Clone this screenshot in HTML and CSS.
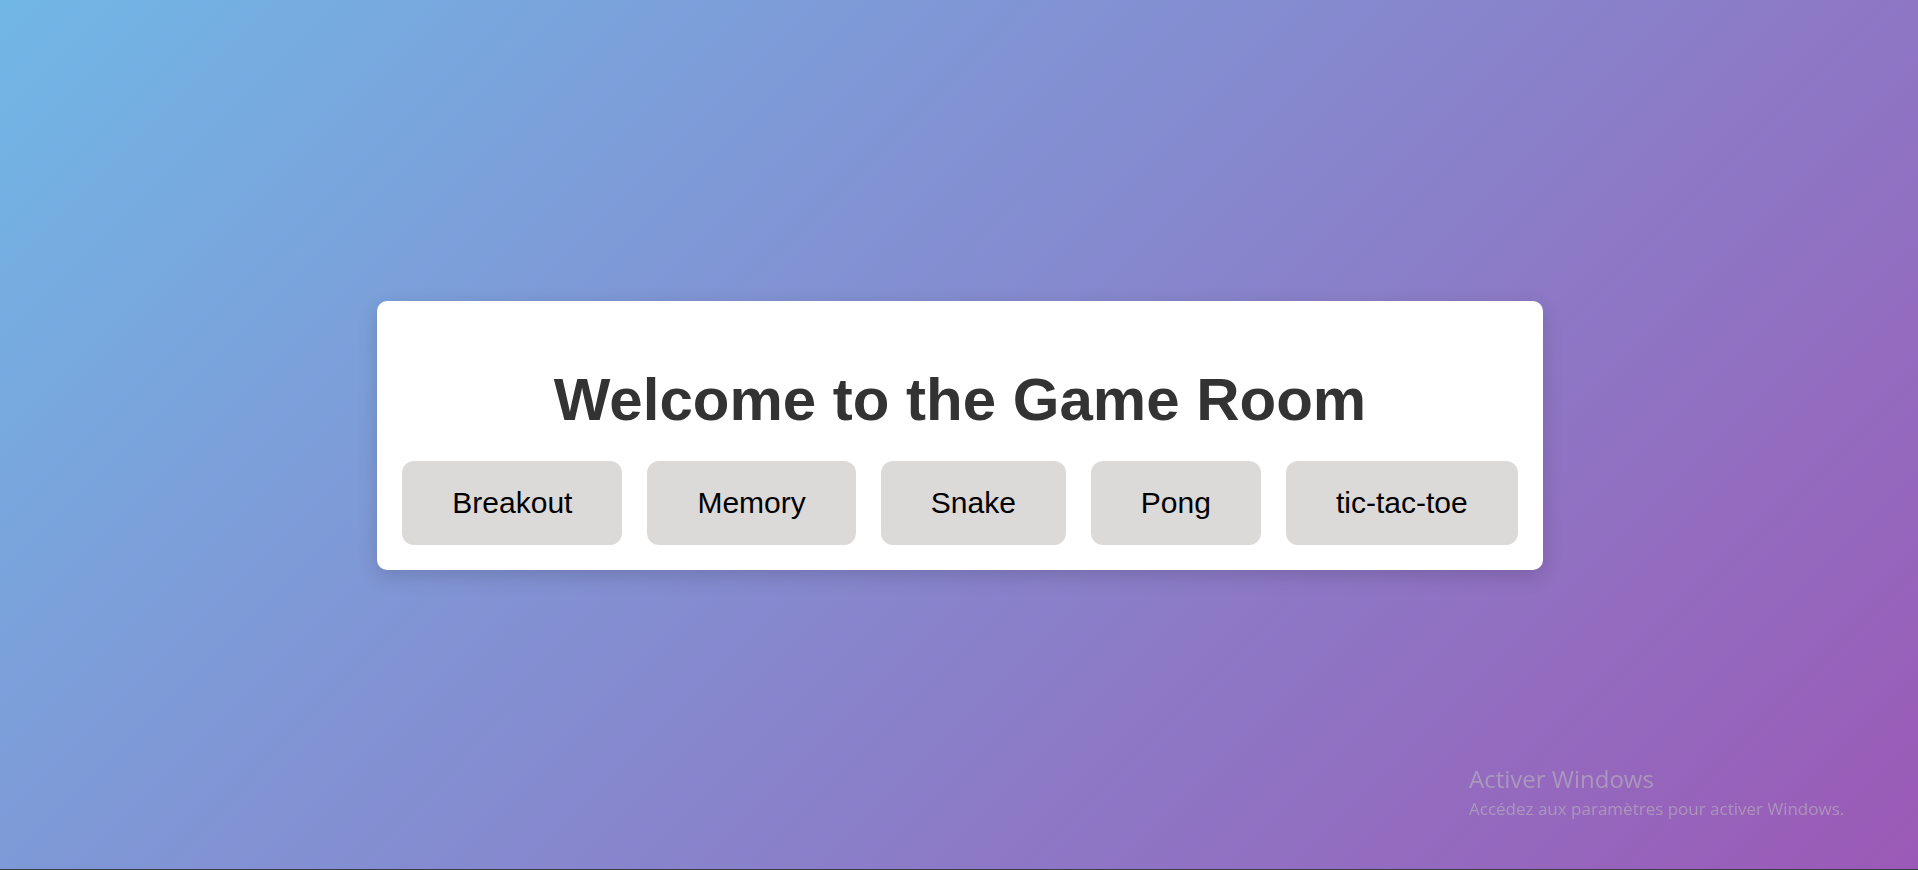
FILE: index.html
```html
<!DOCTYPE html>
<html lang="en">
<head>
<meta charset="utf-8">
<title>Game Room</title>
<link rel="stylesheet" href="styles.css">
</head>
<body>
<main class="stage">
  <section class="card">
    <h1 class="title">Welcome to the Game Room</h1>
    <nav class="games">
      <button class="game">Breakout</button>
      <button class="game">Memory</button>
      <button class="game">Snake</button>
      <button class="game">Pong</button>
      <button class="game">tic-tac-toe</button>
    </nav>
  </section>
</main>
<div class="watermark">
  <div class="wm-title">Activer Windows</div>
  <div class="wm-sub">Accédez aux paramètres pour activer Windows.</div>
</div>
<div class="taskbar-edge"></div>
</body>
</html>
```

FILE: styles.css
```css
html, body {
  margin: 0;
  padding: 0;
  height: 100%;
}

body {
  background: linear-gradient(135deg, #71b7e6, #9b59b6);
  font-family: "Liberation Sans", Arial, sans-serif;
  overflow: hidden;
}

.stage {
  height: 100vh;
  display: flex;
  align-items: center;
  justify-content: center;
  padding-left: 2px;
  box-sizing: border-box;
}

.card {
  background: #fff;
  border-radius: 10px;
  padding: 25px;
  display: flex;
  flex-direction: column;
  align-items: center;
  box-shadow: 0 6px 20px rgba(0, 0, 0, 0.15);
}

.title {
  margin: 40px 0 28px;
  font-size: 60px;
  font-weight: bold;
  line-height: 67px;
  color: #333;
}

.games {
  display: flex;
  gap: 25px;
}

.game {
  font-family: "Liberation Sans", Arial, sans-serif;
  font-size: 30px;
  line-height: 36px;
  padding: 24px 50px;
  border: none;
  border-radius: 12px;
  background: #dcd9d9;
  color: #000;
  cursor: pointer;
}

.watermark {
  position: fixed;
  left: 1469px;
  top: 764px;
  font-family: "Open Sans", "Noto Sans", sans-serif;
  color: rgba(190, 190, 190, 0.55);
  pointer-events: none;
}

.wm-title {
  font-size: 24px;
  line-height: 30px;
}

.wm-sub {
  margin-top: 3px;
  font-size: 17px;
  line-height: 24px;
}

.taskbar-edge {
  position: fixed;
  left: 0;
  right: 0;
  bottom: 0;
  height: 1px;
  background: #3a3a48;
}
```
